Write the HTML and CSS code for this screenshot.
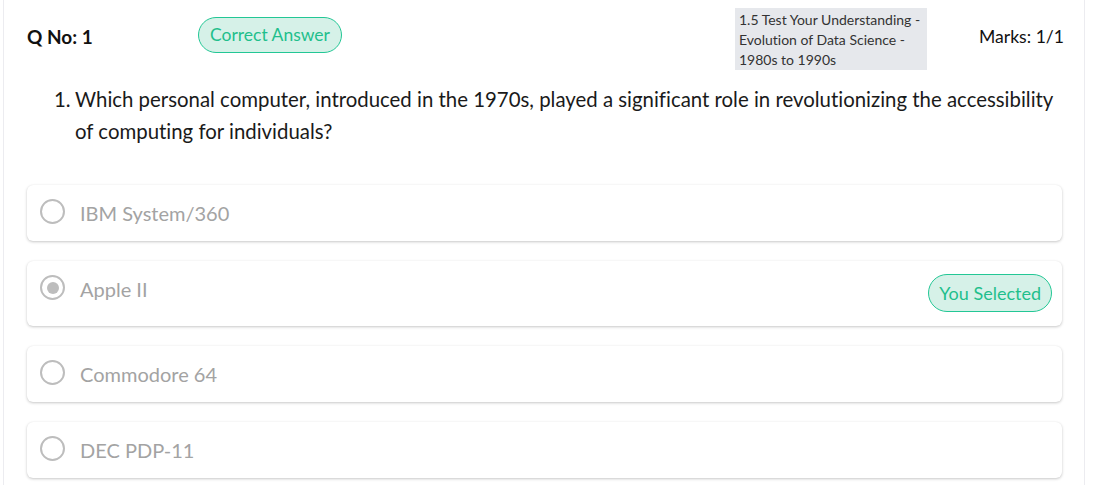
FILE: index.html
```html
<!DOCTYPE html>
<html>
<head>
<meta charset="utf-8">
<link rel="stylesheet" href="styles.css">
</head>
<body>
<div class="page">
  <div class="header">
    <div class="qno">Q No: 1</div>
    <div class="pill top">Correct Answer</div>
    <div class="spacer"></div>
    <div class="topic">1.5 Test Your Understanding -<br>Evolution of Data Science -<br>1980s to 1990s</div>
    <div class="marks">Marks: 1/1</div>
  </div>
  <div class="question">
    <span class="num">1.</span>
    <span class="qtext">Which personal computer, introduced in the 1970s, played a significant role in revolutionizing the accessibility of computing for individuals?</span>
  </div>
  <div class="options">
    <div class="option">
      <div class="choice">
        <span class="radio"></span>
        <span class="label">IBM System/360</span>
      </div>
    </div>
    <div class="option tall">
      <div class="choice">
        <span class="radio checked"></span>
        <span class="label">Apple II</span>
      </div>
      <span class="pill sel">You Selected</span>
    </div>
    <div class="option">
      <div class="choice">
        <span class="radio"></span>
        <span class="label">Commodore 64</span>
      </div>
    </div>
    <div class="option">
      <div class="choice">
        <span class="radio"></span>
        <span class="label">DEC PDP-11</span>
      </div>
    </div>
  </div>
</div>
</body>
</html>
```
FILE: styles.css
```css
html, body {
  margin: 0;
  padding: 0;
  background: #fff;
}
body {
  font-family: Lato, "Open Sans", sans-serif;
  color: #111;
  font-variant-ligatures: none;
}
.page {
  margin-left: 3px;
  width: 1082px;
  border-left: 1px solid #ececf0;
  border-right: 1px solid #ececf0;
  padding: 8px 22px 20px 23px;
  box-sizing: border-box;
  min-height: 485px;
}
.header {
  display: flex;
  align-items: flex-start;
}
.qno {
  width: 171px;
  margin-top: 17px;
  font-size: 19px;
  line-height: 24px;
  font-weight: 700;
  color: #111;
}
.pill {
  display: inline-block;
  border: 1px solid #23c795;
  background: #d6f1e8;
  color: #1fbf8c;
  border-radius: 999px;
  font-size: 18px;
  line-height: 24px;
  padding: 5px 11px;
}
.pill.top {
  margin-top: 9px;
  font-size: 17.5px;
  padding: 5px 11px 5px 11px;
}
.spacer { flex: 1; }
.topic {
  background: #e6e8ec;
  font-size: 14px;
  line-height: 20px;
  padding: 2px 4px 0 4px;
  width: 184px;
  height: 60px;
  color: #333;
}
.marks {
  margin-left: 52px;
  margin-right: -2px;
  margin-top: 17px;
  font-size: 17.6px;
  line-height: 24px;
  color: #111;
}
.question {
  display: flex;
  margin-top: 13px;
  margin-left: 27px;
  font-size: 20.4px;
  line-height: 32px;
  color: #1a1a1a;
}
.num {
  flex: none;
  width: 21px;
}
.options {
  margin-top: 38px;
  display: flex;
  flex-direction: column;
  gap: 20px;
}
.option {
  display: flex;
  align-items: flex-start;
  height: 56px;
  box-sizing: border-box;
  padding: 0 10px 0 13px;
  border-radius: 6px;
  background: #fff;
  box-shadow: 0 1px 3px rgba(0,0,0,0.22), 0 0 1px rgba(0,0,0,0.06);
}
.option.tall { height: 65px; }
.choice {
  flex: 1;
  height: 56px;
  display: flex;
  align-items: center;
}
.radio {
  width: 21px;
  height: 21px;
  margin-top: -3px;
  border: 2.5px solid #bdbdbd;
  border-radius: 50%;
  flex: none;
  position: relative;
  box-sizing: content-box;
}
.radio.checked::after {
  content: "";
  position: absolute;
  left: 4.5px;
  top: 4.5px;
  width: 12px;
  height: 12px;
  border-radius: 50%;
  background: #bdbdbd;
}
.label {
  margin-left: 15px;
  font-size: 20px;
  color: #a3a3a3;
}
.pill.sel {
  align-self: center;
  margin-top: -1px;
  padding: 6px 10px;
}
```
